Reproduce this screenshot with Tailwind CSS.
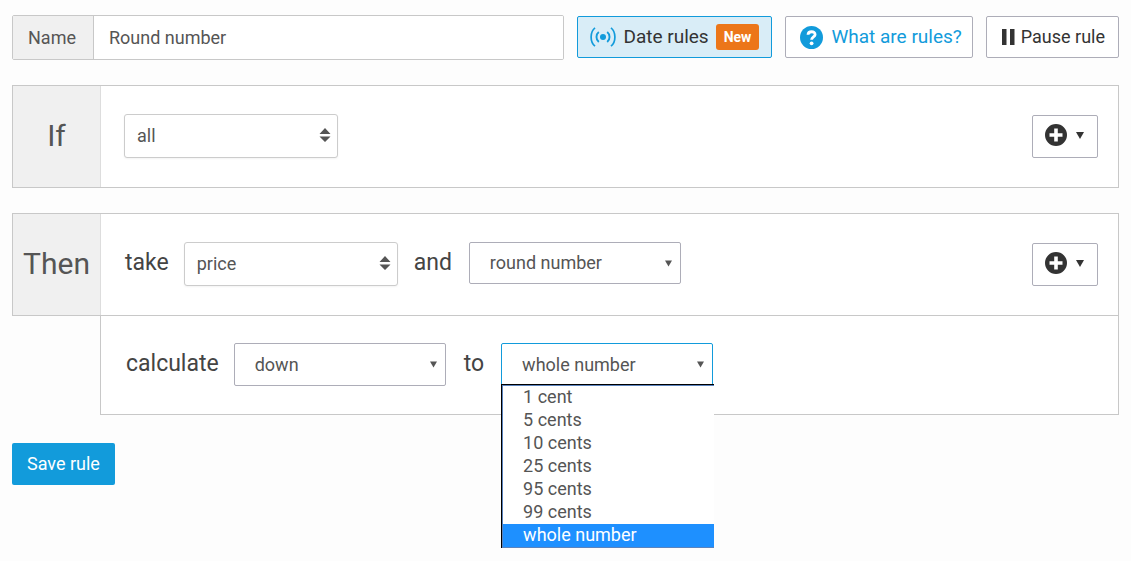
<!DOCTYPE html>
<html lang="en">
<head>
<meta charset="utf-8">
<meta name="viewport" content="width=device-width, initial-scale=1">
<title>Round number</title>
<script src="https://cdn.jsdelivr.net/npm/@tailwindcss/browser@4"></script>
</head>
<body class="min-h-screen bg-[#fdfdfd] px-3 pt-[15px] pb-3 font-['Roboto',sans-serif] text-lg text-[#555]">
<svg class="hidden" aria-hidden="true">
  <symbol id="sort" viewBox="0 0 12 14"><path d="M0.5 6 6 0 11.5 6zM0.5 8.500h11L6 14z" fill="currentColor"/></symbol>
  <symbol id="caret" viewBox="0 0 8 7"><path d="M0 0h8L4 7z" fill="currentColor"/></symbol>
  <symbol id="plus" viewBox="0 0 22 22"><path fill-rule="evenodd" fill="currentColor" d="M11 0a11 11 0 1 0 0 22a11 11 0 0 0 0-22zM9.200 4.500h3.600v4.700h4.700v3.600h-4.700v4.700H9.200v-4.700H4.500V9.200h4.700z"/></symbol>
</svg>
<form>
  <header class="flex flex-wrap items-start gap-[13px]">
    <div class="flex h-[45px] min-w-60 flex-1 overflow-hidden rounded-[2px] border border-[#c8c8c8] bg-white">
      <label for="name" class="flex items-center border-r border-[#c8c8c8] bg-[#f0f0f0] pr-[17px] pl-[15px]">Name</label>
      <input id="name" type="text" value="Round number" class="w-full min-w-0 bg-white px-[15px] outline-none">
    </div>
    <button type="button" class="mt-px flex h-[42px] items-center rounded-[2px] border border-[#129bdb] bg-[#d9edf7] px-3 text-[19px] text-[#333]">
      <svg class="mr-[7px] h-5 w-[26px] text-[#129bdb]" viewBox="0 0 26 20" fill="none" stroke="currentColor" aria-hidden="true">
        <circle cx="13" cy="10" r="3" fill="currentColor" stroke="none"/>
        <path d="M8.800 5C5.700 7.500 5.700 12.500 8.800 15M17.200 5C20.300 7.500 20.300 12.500 17.200 15" stroke-width="1.900"/>
        <path d="M5 0.800C-0.200 5-0.200 15 5 19.200M21 0.800C26.200 5 26.200 15 21 19.200" stroke-width="1.700"/>
      </svg>
      Date rules
      <span class="ml-[7px] rounded-[3px] bg-[#ec7619] px-2 text-sm leading-[26px] font-bold text-white">New</span>
    </button>
    <a href="#" class="mt-px flex h-[42px] items-center rounded-[2px] border border-[#adadb8] bg-white pr-2.5 pl-3.5 text-[19px] text-[#129bdb]">
      <svg class="mr-2 size-[23px]" viewBox="0 0 23 23" aria-hidden="true">
        <circle cx="11.500" cy="11.500" r="11.500" fill="currentColor"/>
        <path d="M8 8.700C8.200 4.700 15.200 4.800 15.100 8.600C15 11 11.600 10.900 11.600 13.800" fill="none" stroke="#fff" stroke-width="2.800"/>
        <circle cx="11.600" cy="17.300" r="1.900" fill="#fff"/>
      </svg>
      What are rules?
    </a>
    <button type="button" class="mt-px flex h-[42px] items-center rounded-[2px] border border-[#adadb8] bg-white pr-[13px] pl-[15px] text-[#333]">
      <svg class="mr-1.5 h-4 w-[13px]" viewBox="0 0 13 16" fill="currentColor" aria-hidden="true"><path d="M0 0h4.500v16H0zM8 0h4.500v16H8z"/></svg>
      Pause rule
    </button>
  </header>

  <section class="mt-[25px] flex h-[103px] border border-[#c8c8c8] bg-white">
    <h2 class="flex w-[88px] shrink-0 items-center justify-center border-r border-[#ddd] bg-[#f0f0f0] text-[30px]">If</h2>
    <div class="flex flex-1 items-center justify-between pr-5 pl-[23px]">
      <div class="relative w-[214px] pb-0.5">
        <select aria-label="Condition" class="h-11 w-full appearance-none rounded-[3px] border border-[#ccc] bg-white px-3 shadow-xs outline-none"><option>all</option></select>
        <svg class="pointer-events-none absolute top-3.5 right-[7px] h-3.5 w-3" aria-hidden="true"><use href="#sort"/></svg>
      </div>
      <button type="button" aria-label="Add condition" class="flex h-[43px] w-[66px] items-center gap-[9px] rounded-[2px] border border-[#adadb8] bg-white pb-[3px] pl-3 text-[#333]">
        <svg class="size-[22px]"><use href="#plus"/></svg><svg class="h-[7px] w-2"><use href="#caret"/></svg>
      </button>
    </div>
  </section>

  <section class="mt-[25px]">
    <div class="flex h-[103px] border border-[#c8c8c8] bg-white">
      <h2 class="flex w-[88px] shrink-0 items-center justify-center border-r border-[#ddd] bg-[#f0f0f0] text-[30px]">Then</h2>
      <div class="flex flex-1 items-center pr-5 pl-6">
        <label for="take" class="mr-[15px] pb-[3px] text-[23px] text-[#444]">take</label>
        <div class="relative w-[214px] pb-0.5">
          <select id="take" class="h-11 w-full appearance-none rounded-[3px] border border-[#ccc] bg-white px-3 shadow-xs outline-none"><option>price</option></select>
          <svg class="pointer-events-none absolute top-3.5 right-[7px] h-3.5 w-3" aria-hidden="true"><use href="#sort"/></svg>
        </div>
        <label for="and" class="mr-[17px] ml-4 pb-[3px] text-[23px] text-[#444]">and</label>
        <div class="relative w-[212px] pb-1">
          <select id="and" class="h-[42px] w-full appearance-none rounded-[2px] border border-[#adadb8] bg-white px-5 outline-none"><option>round number</option></select>
          <svg class="pointer-events-none absolute top-[18px] right-[9px] h-[7px] w-[7px]" aria-hidden="true"><use href="#caret"/></svg>
        </div>
        <button type="button" aria-label="Add action" class="ml-auto flex h-[43px] w-[66px] items-center gap-[9px] rounded-[2px] border border-[#adadb8] bg-white pb-[3px] pl-3 text-[#333]">
          <svg class="size-[22px]"><use href="#plus"/></svg><svg class="h-[7px] w-2"><use href="#caret"/></svg>
        </button>
      </div>
    </div>
    <div class="ml-[88px] flex h-[99px] items-center border border-t-0 border-[#c8c8c8] bg-white pb-0.5 pl-[25px]">
      <label for="calculate" class="mr-[15px] pb-px text-[23px] text-[#444]">calculate</label>
      <div class="relative w-[212px]">
        <select id="calculate" class="h-[43px] w-full appearance-none rounded-[2px] border border-[#adadb8] bg-white px-5 pt-px outline-none"><option>down</option></select>
        <svg class="pointer-events-none absolute top-[18px] right-[9px] h-[7px] w-[7px]" aria-hidden="true"><use href="#caret"/></svg>
      </div>
      <label for="to" class="mr-[17px] ml-[18px] pb-px text-[23px] text-[#444]">to</label>
      <div class="relative w-[212px]">
        <select id="to" class="h-[43px] w-full appearance-none rounded-[2px] border border-[#129bdb] bg-white px-5 pt-px outline-none"><option>whole number</option></select>
        <svg class="pointer-events-none absolute top-[18px] right-[9px] h-[7px] w-[7px]" aria-hidden="true"><use href="#caret"/></svg>
        <div class="absolute top-[41px] left-0 w-[213px] border-t border-l border-black">
          <ul role="listbox" aria-label="Rounding" class="border-y border-l border-[#5b83bd] bg-white leading-[21px]">
            <li role="option" class="pb-0.5 pl-5">1 cent</li>
            <li role="option" class="pb-0.5 pl-5">5 cents</li>
            <li role="option" class="pb-0.5 pl-5">10 cents</li>
            <li role="option" class="pb-0.5 pl-5">25 cents</li>
            <li role="option" class="pb-0.5 pl-5">95 cents</li>
            <li role="option" class="pb-0.5 pl-5">99 cents</li>
            <li role="option" aria-selected="true" class="bg-[#1e90ff] pb-0.5 pl-5 text-white">whole number</li>
          </ul>
        </div>
      </div>
    </div>
  </section>
  <button type="submit" class="mt-7 h-[42px] rounded-[2px] bg-[#129bdb] px-[15px] text-white">Save rule</button>
</form>
</body>
</html>
